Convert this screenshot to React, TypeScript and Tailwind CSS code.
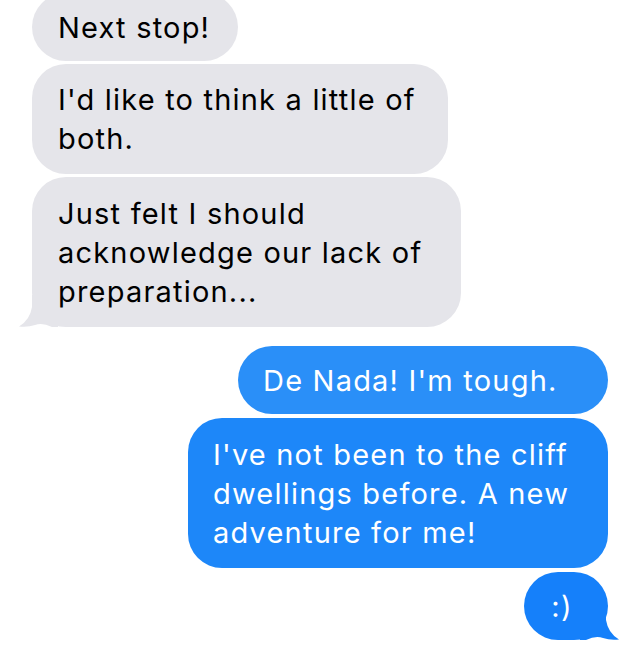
import React from 'react';

type Msg = { text: string; width: string; tail?: boolean; color?: string };

const received: Msg[] = [
  { text: 'Next stop!', width: 'w-[206px] py-[14.5px]' },
  { text: "I'd like to think a little of both.", width: 'w-[416px] py-4' },
  { text: 'Just felt I should acknowledge our lack of preparation...', width: 'w-[429px] py-[16.5px]', tail: true },
];

const sent: Msg[] = [
  { text: "De Nada! I'm tough.", width: 'w-[370px] py-[14.5px] pl-[25px]', color: 'bg-[#2a8ff8]' },
  {
    text: "I've not been to the cliff dwellings before. A new adventure for me!",
    width: 'w-[420px] py-[16.5px] pl-[25px]',
    color: 'bg-[#1d87f9]',
  },
  { text: ':)', width: 'w-[84px] py-[14.5px] text-center', color: 'bg-[#1580fa]', tail: true },
];

function GrayTail() {
  return (
    <svg className="absolute -left-[14px] bottom-0" width="40" height="32" viewBox="0 0 40 32">
      <path d="M14 0 H40 V32 H34 Q24 27 17 30 Q10 32.5 1 31.5 Q12 25 14 12 Z" fill="#e5e5ea" />
    </svg>
  );
}

function BlueTail() {
  return (
    <svg className="absolute -right-[12px] bottom-0" width="40" height="32" viewBox="0 0 40 32">
      <path d="M26 0 H0 V32 H6 Q16 27 23 30 Q30 32.5 39 31.5 Q28 25 26 12 Z" fill="#1580fa" />
    </svg>
  );
}

export default function App() {
  return (
    <div
      className="w-[640px] h-[652px] overflow-hidden bg-white px-8 text-[29px] leading-[39px] tracking-[1.2px]"
      style={{ fontFamily: 'Inter, "Helvetica Neue", Arial, sans-serif' }}
    >
      <div className="flex flex-col items-start gap-[3px] -mt-[7px]">
        {received.map((m, i) => (
          <div
            key={i}
            className={`relative bg-[#e5e5ea] text-black rounded-[34px] pl-[26px] pr-2 ${m.width}`}
          >
            {m.tail && <GrayTail />}
            <span className="relative">{m.text}</span>
          </div>
        ))}
      </div>

      <div className="flex flex-col items-end gap-1 mt-[19px]">
        {sent.map((m, i) => (
          <div key={i} className={`relative ${m.color} text-white rounded-[34px] pr-2 ${m.width}`}>
            {m.tail && <BlueTail />}
            <span className="relative">{m.text}</span>
          </div>
        ))}
      </div>
    </div>
  );
}
